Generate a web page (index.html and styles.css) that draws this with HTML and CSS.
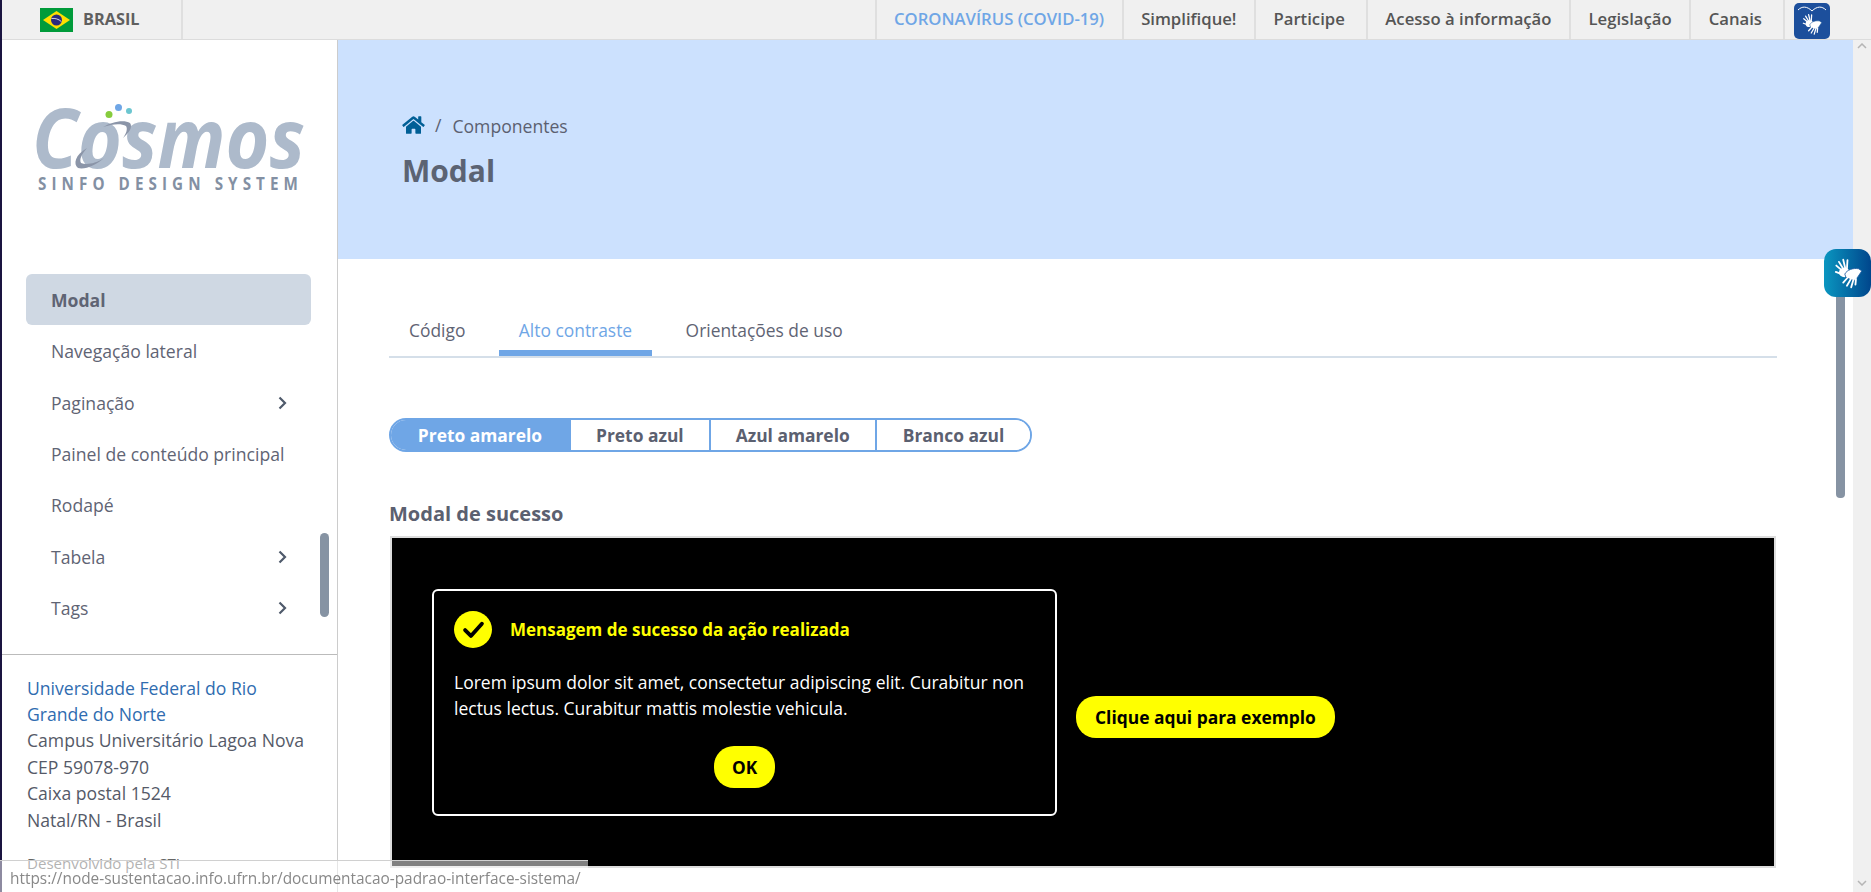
FILE: index.html
```html
<!DOCTYPE html>
<html lang="pt-BR">
<head>
    <meta charset="UTF-8">
    <meta name="viewport" content="width=device-width, initial-scale=1.0">
    <title>Cosmos - Modal</title>
    <link rel="stylesheet" href="styles.css">
</head>
<body>
    <svg class="defs" aria-hidden="true">
        <symbol id="hands" viewBox="0 0 32 32">
            <g fill="none" stroke="#fff" stroke-width="1.7" stroke-linecap="round">
                <path d="M12 15 5 9"/>
                <path d="M12 13 7.500 5.500"/>
                <path d="M13.500 12 11.500 3.500"/>
                <path d="M15 12 15.500 4"/>
                <path d="M10 17 4.500 15"/>
            </g>
            <ellipse cx="12.500" cy="15.500" rx="5" ry="4.500" fill="#fff"/>
            <path d="M13 17c2-4 8-6 13-5l3 2-4 6-3 3-4-1-4-2z" fill="#fff" stroke="#1c5a9f" stroke-width=".8"/>
            <g fill="none" stroke="#fff" stroke-width="1.7" stroke-linecap="round">
                <path d="M16 20 11.500 25"/>
                <path d="M18.500 22 15 28"/>
                <path d="M21 22.500 19 29.500"/>
                <path d="M23.500 21.500 23 27"/>
            </g>
        </symbol>
    </svg>

    <div class="page">
        <header class="topbar">
            <div class="brasil">
                <svg class="flag" viewBox="0 0 33 24">
                    <rect width="33" height="24" fill="#009b3a"/>
                    <polygon points="16.500,3 30,12 16.500,21 3,12" fill="#fedf00"/>
                    <circle cx="16.500" cy="12" r="5.500" fill="#2a2a7e"/>
                    <path d="M11.500 10.500c3.500-.5 7 .5 9.800 3" fill="none" stroke="#fff" stroke-width=".8"/>
                </svg>
                <span>BRASIL</span>
            </div>
            <nav class="topnav">
                <a class="topnav-item covid">CORONAVÍRUS (COVID-19)</a>
                <a class="topnav-item">Simplifique!</a>
                <a class="topnav-item roomy">Participe</a>
                <a class="topnav-item">Acesso à informação</a>
                <a class="topnav-item">Legislação</a>
                <a class="topnav-item roomy">Canais</a>
                <div class="topnav-icon">
                    <div class="libras-small">
                        <svg class="libras-arc" viewBox="0 0 36 10">
                            <path d="M4 7c4-4 9-4 14 1 5-5 10-5 14-1" fill="none" stroke="#fff" stroke-width="1"/>
                        </svg>
                        <svg class="libras-hands"><use href="#hands"/></svg>
                    </div>
                </div>
            </nav>
        </header>

        <div class="main">
            <aside class="sidebar">
                <div class="logo">
                    <svg class="logo-svg" viewBox="30 100 277 95">
                        <text class="logo-word" x="32" y="168" textLength="273" lengthAdjust="spacingAndGlyphs">Cosmos</text>
                        <path d="M78 168c-5-4-3-13 9-20-5 6-8 11-6 15 5 2 14 1 23-5-8 7-19 12-26 10z" fill="#8b95a8"/>
                        <path d="M103 127c8-5 21-8 27-4 3 4-1 10-7 15 3-4 5-9 3-12-5-3-14-2-23 1z" fill="#8b95a8"/>
                        <circle cx="109" cy="114.500" r="3.500" fill="#86cc3d"/>
                        <circle cx="118.500" cy="107.500" r="3.500" fill="#6fa6e6"/>
                        <circle cx="129" cy="111" r="3" fill="#6cc6d0"/>
                        <text class="logo-tag" x="38" y="190" textLength="265" lengthAdjust="spacingAndGlyphs">SINFO DESIGN SYSTEM</text>
                    </svg>
                </div>
                <div class="side-scroll">
                    <ul class="sidenav">
                        <li class="sidenav-item active">Modal</li>
                        <li class="sidenav-item">Navegação lateral</li>
                        <li class="sidenav-item">Paginação
                            <svg class="chev" viewBox="0 0 9 14"><path d="M1.500 1.500 7 7l-5.500 5.500"/></svg>
                        </li>
                        <li class="sidenav-item">Painel de conteúdo principal</li>
                        <li class="sidenav-item">Rodapé</li>
                        <li class="sidenav-item">Tabela
                            <svg class="chev" viewBox="0 0 9 14"><path d="M1.500 1.500 7 7l-5.500 5.500"/></svg>
                        </li>
                        <li class="sidenav-item">Tags
                            <svg class="chev" viewBox="0 0 9 14"><path d="M1.500 1.500 7 7l-5.500 5.500"/></svg>
                        </li>
                    </ul>
                    <div class="side-thumb"></div>
                </div>
                <footer class="side-footer">
                    <a class="ufrn">Universidade Federal do Rio Grande do Norte</a>
                    <p>Campus Universitário Lagoa Nova</p>
                    <p>CEP 59078-970</p>
                    <p>Caixa postal 1524</p>
                    <p>Natal/RN - Brasil</p>
                    <p class="credit">Desenvolvido pela STI</p>
                </footer>
            </aside>

            <main class="content">
                <section class="hero">
                    <div class="crumbs">
                        <svg class="home" viewBox="0 0 576 512"><path d="M280.37 148.26L96 300.11V464a16 16 0 0 0 16 16l112.06-.29a16 16 0 0 0 15.92-16V368a16 16 0 0 1 16-16h64a16 16 0 0 1 16 16v95.64a16 16 0 0 0 16 16.05L464 480a16 16 0 0 0 16-16V300L295.67 148.26a12.19 12.19 0 0 0-15.3 0zM571.6 251.47L488 182.56V44.05a12 12 0 0 0-12-12h-56a12 12 0 0 0-12 12v72.61L318.47 43a48 48 0 0 0-61 0L4.34 251.47a12 12 0 0 0-1.6 16.9l25.5 31A12 12 0 0 0 45.15 301l235.22-193.74a12.19 12.19 0 0 1 15.3 0L530.9 301a12 12 0 0 0 16.9-1.6l25.5-31a12 12 0 0 0-1.7-16.93z"/></svg>
                        <span class="crumb-sep">/</span>
                        <span class="crumb-text">Componentes</span>
                    </div>
                    <h1>Modal</h1>
                </section>

                <section class="docs">
                    <div class="tabs">
                        <a class="tab">Código</a>
                        <a class="tab active">Alto contraste</a>
                        <a class="tab">Orientações de uso</a>
                    </div>

                    <div class="segments">
                        <button class="segment active">Preto amarelo</button>
                        <button class="segment">Preto azul</button>
                        <button class="segment">Azul amarelo</button>
                        <button class="segment">Branco azul</button>
                    </div>

                    <h2>Modal de sucesso</h2>

                    <div class="preview">
                        <div class="modal">
                            <div class="modal-head">
                                <span class="modal-check">
                                    <svg viewBox="0 0 24 24"><path d="M5.500 12.500 10 17l8.500-9.500"/></svg>
                                </span>
                                <strong>Mensagem de sucesso da ação realizada</strong>
                            </div>
                            <p>Lorem ipsum dolor sit amet, consectetur adipiscing elit. Curabitur non lectus lectus. Curabitur mattis molestie vehicula.</p>
                            <div class="modal-foot">
                                <button class="yellow-btn">OK</button>
                            </div>
                        </div>
                        <button class="yellow-btn open-btn">Clique aqui para exemplo</button>
                    </div>
                </section>

                <div class="content-thumb"></div>
                <button class="libras-float">
                    <svg class="libras-float-hands"><use href="#hands"/></svg>
                </button>
            </main>

            <div class="page-scroll">
                <svg viewBox="0 0 10 6"><path d="M1 5l4-4 4 4"/></svg>
                <svg viewBox="0 0 10 6"><path d="M1 1l4 4 4-4"/></svg>
            </div>
        </div>
    </div>

    <div class="status">https://node-sustentacao.info.ufrn.br/documentacao-padrao-interface-sistema/</div>
</body>
</html>
```

FILE: styles.css
```css
* {
    box-sizing: border-box;
}

body {
    margin: 0;
    height: 892px;
    overflow: hidden;
    font-family: "Open Sans", "Noto Sans", sans-serif;
    font-size: 17.6px;
    line-height: 26.4px;
    color: #5b6070;
    background: #fff;
}

p, ul, h1, h2 {
    margin: 0;
    padding: 0;
}

.defs {
    position: absolute;
    width: 0;
    height: 0;
}

.page {
    height: 892px;
    display: flex;
    flex-direction: column;
    border-left: 2px solid #1a1440;
}

/* barra do governo */
.topbar {
    height: 40px;
    flex: none;
    display: flex;
    justify-content: space-between;
    background: #f0f0f0;
    border-bottom: 1px solid #dcdcdc;
}

.brasil {
    width: 181px;
    display: flex;
    align-items: center;
    gap: 10px;
    padding-left: 38px;
    font-size: 16.3px;
    font-weight: 700;
    color: #5f5f5f;
    border-right: 2px solid #dfdfdf;
}

.flag {
    width: 33px;
    height: 24px;
}

.topnav {
    display: flex;
}

.topnav-item {
    display: flex;
    align-items: center;
    padding: 0 17.500px;
    font-size: 16.7px;
    font-weight: 600;
    color: #555;
    border-left: 2px solid #dfdfdf;
}

.topnav-item.roomy {
    padding-right: 21px;
}

.topnav-item.covid {
    color: #6fa6e6;
}

.topnav-icon {
    width: 88px;
    padding: 3px 0 0 9px;
    border-left: 2px solid #dfdfdf;
}

.libras-small {
    width: 36px;
    height: 36px;
    display: flex;
    flex-direction: column;
    align-items: center;
    background: #1c4f9c;
    border-radius: 5px;
}

.libras-arc {
    width: 36px;
    height: 10px;
    flex: none;
}

.libras-hands {
    width: 24px;
    height: 24px;
    margin-top: -1px;
}

.main {
    flex: 1;
    min-height: 0;
    display: flex;
}

/* menu lateral */
.sidebar {
    width: 336px;
    flex: none;
    display: flex;
    flex-direction: column;
    background: #fff;
    border-right: 1px solid #ccc;
}

.logo {
    height: 234px;
    flex: none;
    padding: 60px 0 0 28px;
}

.logo-svg {
    display: block;
    width: 277px;
    height: 95px;
    overflow: visible;
}

.logo-word {
    font-size: 82px;
    font-weight: 700;
    font-style: italic;
    fill: #adbacb;
}

.logo-tag {
    font-size: 18px;
    font-weight: 700;
    letter-spacing: 6px;
    fill: #8390a3;
}

.side-scroll {
    height: 381px;
    flex: none;
    position: relative;
    padding-left: 24px;
    border-bottom: 1px solid #bbb;
}

.sidenav {
    list-style: none;
    width: 285px;
}

.sidenav-item {
    height: 51.33px;
    display: flex;
    align-items: center;
    justify-content: space-between;
    padding: 1px 24px 0 25px;
    color: #5f6474;
    white-space: nowrap;
}

.sidenav-item.active {
    font-weight: 700;
    background: #cfd8e3;
    border-radius: 6px;
}

.chev {
    width: 9px;
    height: 14px;
    fill: none;
    stroke: #4f5a6b;
    stroke-width: 2.200;
}

.side-thumb {
    position: absolute;
    left: 318px;
    top: 259px;
    width: 9px;
    height: 84px;
    background: #8693a3;
    border-radius: 5px;
}

.side-footer {
    padding: 19.500px 25px 0;
    color: #555a68;
}

.ufrn {
    display: block;
    color: #2f6cb0;
}

.credit {
    margin-top: 17px;
    font-size: 15.1px;
    color: #666;
}

/* conteudo */
.content {
    flex: 1;
    min-width: 0;
    position: relative;
    background: #fff;
}

.hero {
    height: 219px;
    padding: 71px 0 0 64px;
    background: #cce1fe;
}

.crumbs {
    display: flex;
    align-items: center;
    height: 28px;
}

.home {
    width: 23px;
    height: 20px;
    fill: #005f96;
}

.crumb-sep {
    margin: 0 11px 0 10px;
}

.crumb-text {
    padding-top: 2px;
}

h1 {
    margin-top: 12px;
    font-size: 30px;
    line-height: 40px;
    font-weight: 700;
    color: #5b6373;
}

.docs {
    padding: 58px 76px 0 51px;
}

.tabs {
    display: flex;
    gap: 13.500px;
    border-bottom: 2px solid #d5dfe9;
}

.tab {
    padding: 0 20px 7px;
    border-bottom: 6px solid transparent;
    font-size: 17.4px;
    color: #5f6474;
}

.tab.active {
    color: #6fa6e6;
    border-bottom-color: #6fa6e6;
}

.segments {
    display: inline-flex;
    vertical-align: top;
    margin-top: 60px;
    height: 34px;
    border: 2px solid #6fa6e6;
    border-radius: 17px;
    overflow: hidden;
}

.segment {
    padding: 0 25px;
    border: 0;
    border-left: 2px solid #6fa6e6;
    background: #fff;
    font-family: inherit;
    font-size: 17.4px;
    font-weight: 700;
    color: #5b6070;
}

.segment:first-child {
    width: 178px;
    padding: 0;
    border-left: 0;
}

.segment:last-child {
    padding: 0 26px;
}

.segment.active {
    background: #6fa6e6;
    color: #fff;
}

h2 {
    margin-top: 49px;
    font-size: 20px;
    line-height: 26px;
    font-weight: 700;
    color: #5b6070;
}

.preview {
    margin: 9px 1px 0;
    height: 332px;
    display: flex;
    align-items: center;
    gap: 19px;
    padding-left: 40px;
    background: #000;
    border: 2px solid #ddd;
}

.modal {
    width: 625px;
    flex: none;
    padding: 20px 20px 26px;
    border: 2px solid #fff;
    border-radius: 6px;
    color: #fff;
}

.modal-head {
    display: flex;
    align-items: center;
    gap: 18px;
    font-size: 17px;
    color: #ff0;
}

.modal-head strong {
    padding-top: 2px;
}

.modal-check {
    width: 38px;
    height: 37px;
    flex: none;
    display: flex;
    align-items: center;
    justify-content: center;
    background: #ff0;
    border-radius: 50%;
}

.modal-check svg {
    width: 31px;
    height: 31px;
    fill: none;
    stroke: #000;
    stroke-width: 3;
    stroke-linecap: round;
    stroke-linejoin: round;
}

.modal p {
    margin-top: 21px;
    font-size: 17.5px;
}

.modal-foot {
    display: flex;
    justify-content: center;
    margin-top: 25px;
}

.yellow-btn {
    height: 42px;
    padding: 0 18px;
    border: 0;
    border-radius: 20px;
    background: #ff0;
    color: #000;
    font-family: inherit;
    font-size: 17.3px;
    font-weight: 700;
}

.open-btn {
    margin-top: 30px;
    padding: 0 19px;
    font-size: 17.4px;
}

.content-thumb {
    position: absolute;
    left: 1498px;
    top: 240px;
    width: 9px;
    height: 218px;
    background: #8693a3;
    border-radius: 0 0 4px 4px;
}

.libras-float {
    position: absolute;
    right: -18px;
    top: 209px;
    width: 47px;
    height: 48px;
    padding: 0;
    display: flex;
    align-items: center;
    justify-content: center;
    border: 0;
    border-radius: 12px;
    background: linear-gradient(90deg, #0a96c0, #00468c);
}

.libras-float-hands {
    width: 34px;
    height: 34px;
}

.page-scroll {
    width: 18px;
    flex: none;
    display: flex;
    flex-direction: column;
    justify-content: space-between;
    align-items: center;
    padding: 3px 0 6px;
    background: #f0f0f0;
}

.page-scroll svg {
    width: 10px;
    height: 6px;
    fill: none;
    stroke: #b5b5b5;
    stroke-width: 1.500;
}

/* barra de status do navegador */
.status {
    position: fixed;
    left: 0;
    bottom: 0;
    width: 588px;
    height: 32px;
    padding: 5px 0 0 10px;
    font-size: 15.4px;
    color: #888;
    white-space: nowrap;
    background: rgba(255, 255, 255, 0.5);
    border-top: 1px solid #d0d0d0;
}
```
